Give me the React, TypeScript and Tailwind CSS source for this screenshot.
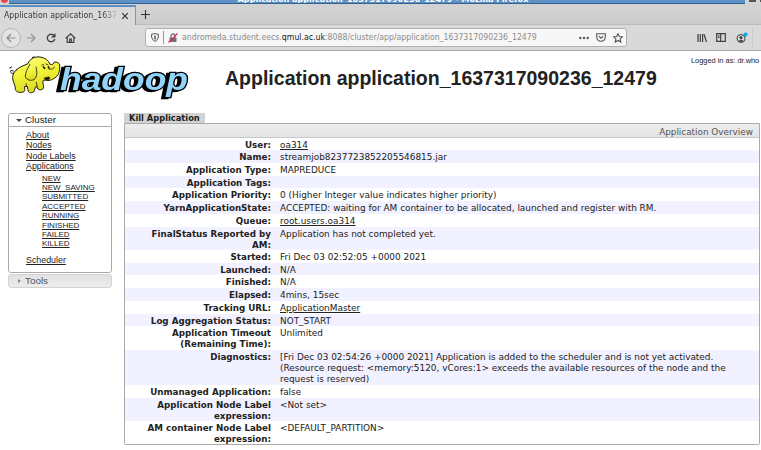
import React from "react";

type Row = { label: string[]; value: string[]; link?: boolean; h: string };

const H1 = "h-[12px]";
const H2 = "h-[13px]";
const ROWS: Row[] = [
  { label: ["User:"], value: ["oa314"], link: true, h: H1 },
  { label: ["Name:"], value: ["streamjob8237723852205546815.jar"], h: H2 },
  { label: ["Application Type:"], value: ["MAPREDUCE"], h: H2 },
  { label: ["Application Tags:"], value: [""], h: H1 },
  { label: ["Application Priority:"], value: ["0 (Higher Integer value indicates higher priority)"], h: H2 },
  { label: ["YarnApplicationState:"], value: ["ACCEPTED: waiting for AM container to be allocated, launched and register with RM."], h: H2 },
  { label: ["Queue:"], value: ["root.users.oa314"], link: true, h: H2 },
  { label: ["FinalStatus Reported by", "AM:"], value: ["Application has not completed yet."], h: "h-[23px]" },
  { label: ["Started:"], value: ["Fri Dec 03 02:52:05 +0000 2021"], h: H2 },
  { label: ["Launched:"], value: ["N/A"], h: H1 },
  { label: ["Finished:"], value: ["N/A"], h: H2 },
  { label: ["Elapsed:"], value: ["4mins, 15sec"], h: H2 },
  { label: ["Tracking URL:"], value: ["ApplicationMaster"], link: true, h: H2 },
  { label: ["Log Aggregation Status:"], value: ["NOT_START"], h: H1 },
  { label: ["Application Timeout", "(Remaining Time):"], value: ["Unlimited"], h: "h-[24px]" },
  {
    label: ["Diagnostics:"],
    value: [
      "[Fri Dec 03 02:54:26 +0000 2021] Application is added to the scheduler and is not yet activated.",
      "(Resource request: <memory:5120, vCores:1> exceeds the available resources of the node and the",
      "request is reserved)",
    ],
    h: "h-[35px]",
  },
  { label: ["Unmanaged Application:"], value: ["false"], h: H2 },
  { label: ["Application Node Label", "expression:"], value: ["<Not set>"], h: "h-[23px]" },
  { label: ["AM container Node Label", "expression:"], value: ["<DEFAULT_PARTITION>"], h: "h-[23px]" },
];

const STATES = ["NEW", "NEW_SAVING", "SUBMITTED", "ACCEPTED", "RUNNING", "FINISHED", "FAILED", "KILLED"];
const LINK = "underline decoration-[1px] underline-offset-[1px]";

function Logo() {
  return (
    <svg width="186" height="50" viewBox="6 52 186 50" className="block">
      <defs>
        <linearGradient id="hide" x1="0" y1="0" x2="0.3" y2="1">
          <stop offset="0" stopColor="#fbfb86" />
          <stop offset="0.5" stopColor="#f4f43c" />
          <stop offset="1" stopColor="#dcd820" />
        </linearGradient>
      </defs>
      <text
        x="60"
        y="89.500"
        textLength="128"
        lengthAdjust="spacingAndGlyphs"
        fill="#92d3fa"
        stroke="#000"
        strokeWidth="2.500"
        className="font-['Liberation_Sans',Arial,sans-serif] text-[32px] font-bold italic [paint-order:stroke] drop-shadow-[-3px_1px_0_#000]"
      >
        hadoop
      </text>
      <g transform="translate(0 45) scale(.3333)" strokeLinejoin="round" strokeLinecap="round" stroke="#1c1c08" strokeWidth="3">
        <path
          d="M50 74C60 64 72 62 84 56C88 42 104 34 120 36C136 38 146 46 150 58C158 60 162 56 163 51C170 50 178 54 179 60C180 80 176 92 164 99C156 105 146 109 138 105L130 106C127 113 130 118 131 126C132 134 120 137 114 132L108 124C104 128 105 136 101 141C92 146 84 142 84 135L82 124L73 125C74 130 76 136 72 140C62 145 48 141 46 134C48 122 38 112 38 98C38 87 42 80 50 74Z"
          fill="url(#hide)"
        />
        <path d="M90 58C82 72 76 82 76 96C82 106 92 108 102 104C112 96 112 82 108 66" fill="url(#hide)" strokeWidth="2.500" />
        <path d="M133 99C140 98 144 94 149 97C150 104 143 108 137 105Z" fill="#1c1c08" strokeWidth="2" />
        <path d="M125 60Q128 57 132 60M138 57l6 2M148 73Q160 74 164 66M112 126L109 112M80 124L78 116" fill="none" strokeWidth="2.500" />
        <path d="M130 66l4 4M145 66l2 3" fill="none" strokeWidth="5" />
        <path d="M40 85C32 86 29 80 33 76L40 78M29 69l6-3M97 38l5-3" fill="none" strokeWidth="3" />
      </g>
    </svg>
  );
}

function Chrome() {
  return (
    <header className="font-['DejaVu_Sans_Condensed','DejaVu_Sans',sans-serif] [font-stretch:condensed]">
      <div className="flex h-[4px] bg-[#d4d4d4]">
        <div className="w-[9px] overflow-hidden"><div className="-mt-[4px] ml-[1px] size-[7px] rounded-full bg-[#e8434f]" /></div>
        <div className="flex h-[4px] w-[736px] justify-center overflow-hidden border-b border-[#35618f] bg-[#5b91c6] pl-[12px] text-[9px] font-bold leading-[10px] text-white">
          <span className="-mt-[6px] whitespace-nowrap">Application application_1637317090236_12479 - Mozilla Firefox</span>
        </div>
        <div className="ml-[4px] h-[2px] w-[7px] bg-[#555]" />
        <div className="ml-[4px] h-[2px] w-px bg-[#555]" />
      </div>
      <div className="flex h-[21px] border-b border-[#bdbdbd] bg-linear-to-b from-[#d3d3d3] to-[#cccccc]">
        <div className="mt-[1px] flex h-[20px] w-[136px] items-center border-t-2 border-r border-t-[#5b91c6] border-r-[#929292] bg-[#d9d9d9] pl-[4px]">
          <span className="w-[115px] overflow-hidden whitespace-nowrap bg-linear-to-r from-[#333] from-85% to-transparent bg-clip-text text-[8.7px] text-transparent">Application application_1637</span>
          <svg width="8" height="8" viewBox="0 0 8 8" className="ml-[2px]"><path d="M1.200 1.200l5.600 5.600M6.800 1.200l-5.600 5.600" stroke="#333" strokeWidth="1.200" /></svg>
        </div>
        <svg width="9" height="9" viewBox="0 0 9 9" className="ml-[5px] mt-[6px]"><path d="M0 4.500h9M4.500 0v9" stroke="#333" strokeWidth="1.100" /></svg>
      </div>
      <div className="flex h-[26px] items-center border-b border-[#a3a3a3] bg-[#d9d9d9]">
        <div className="ml-[1px] flex size-[20px] items-center justify-center rounded-full border border-[#b5b5b5] bg-[#e3e3e3]">
          <svg width="10" height="10" viewBox="0 0 10 10" fill="none" stroke="#8c8c8c" strokeWidth="1.200"><path d="M9.500 5H1M5 1L1 5l4 4" /></svg>
        </div>
        <svg width="10" height="10" viewBox="0 0 10 10" fill="none" stroke="#929292" strokeWidth="1.200" className="ml-[5px]"><path d="M.5 5H9M5 1l4 4-4 4" /></svg>
        <svg width="10" height="10" viewBox="0 0 10 10" fill="none" stroke="#404040" strokeWidth="1.400" className="ml-[10px]"><path d="M8 2.500A3.800 3.800 0 1 0 8.800 6" /><path d="M9.500 0v4.500H5z" fill="#404040" stroke="none" /></svg>
        <svg width="11" height="10" viewBox="0 0 11 10" fill="none" stroke="#404040" strokeWidth="1.200" className="ml-[9px]"><path d="M.7 5.200L5.500.8l4.800 4.400M2.200 4.500v4.900h6.600V4.500M4.700 9V6h1.600v3" /></svg>
        <div className="ml-[69px] flex h-[19px] w-[482px] items-center rounded-[3px] border border-[#b0b0b0] bg-[#f7f7f7] pl-[5px]">
          <svg width="8" height="9" viewBox="0 0 8 9" fill="none" stroke="#555" strokeWidth="1"><path d="M.6 1.200Q2.500 1.200 4 .5 5.500 1.200 7.400 1.200V4Q7 7 4 8.500 1 7 .6 4z" /><path d="M4 2.500v4" strokeWidth="1.500" /></svg>
          <div className="ml-[4px] h-[13px] w-px bg-[#999]" />
          <svg width="10" height="10" viewBox="0 0 10 10" className="ml-[4px]"><path d="M1.500 4.500h7V9h-7z" fill="#707070" /><path d="M3 4.500V3a2 2 0 0 1 4 0v1.500" fill="none" stroke="#707070" strokeWidth="1.300" /><path d="M.5 9.500l9-9" stroke="#e22850" strokeWidth="1.300" /></svg>
          <span className="ml-[4px] w-[397px] whitespace-nowrap text-[8.690px] text-[#8c8c8c]">andromeda.student.eecs.<span className="text-[#222]">qmul.ac.uk</span>:8088/cluster/app/application_1637317090236_12479</span>
          <svg width="10" height="4" viewBox="0 0 10 4" fill="#555"><circle cx="1.300" cy="2" r="1.200" /><circle cx="5" cy="2" r="1.200" /><circle cx="8.700" cy="2" r="1.200" /></svg>
          <svg width="10" height="9" viewBox="0 0 10 9" fill="none" stroke="#555" strokeWidth="1.100" className="ml-[7px]"><path d="M.7.700h8.600V4a4.300 4.300 0 0 1-8.600 0zM2.800 3.200L5 5.200l2.200-2" /></svg>
          <svg width="10" height="10" viewBox="0 0 10 10" fill="none" stroke="#555" strokeWidth="1.100" className="ml-[7px]"><path d="M5 .6l1.300 2.900 3.100.3-2.300 2.100.7 3.200L5 7.500 2.200 9.100l.7-3.200L.6 3.800l3.100-.3z" /></svg>
        </div>
        <svg width="10" height="10" viewBox="0 0 10 10" stroke="#404040" strokeWidth="1.200" className="ml-[70px]"><path d="M1 1v8M3.300 1v8M5.600 1v8M7 1.200L9.500 9" /></svg>
        <svg width="10" height="9" viewBox="0 0 10 9" fill="none" stroke="#404040" strokeWidth="1.200" className="ml-[9px]"><path d="M.7.700h8.600v7.600H.7zM4.700.700v7.600M2 2.800h1.500M2 4.500h1.500" /></svg>
        <svg width="12" height="12" viewBox="0 0 12 12" className="ml-[10px]"><circle cx="5" cy="6.500" r="4" fill="none" stroke="#404040" strokeWidth="1" /><circle cx="5" cy="5.500" r="1.500" fill="#404040" /><path d="M2.500 9q2.500-3 5 0L5 10z" fill="#404040" /><circle cx="9.600" cy="2.400" r="2" fill="#00adf0" /></svg>
        <div className="ml-[4px] h-[20px] w-px bg-[#cbcbcb]" />
      </div>
    </header>
  );
}

function Sidebar() {
  return (
    <nav className="ml-[8px] w-[104px] text-[#222]">
      <div className="h-[160px] rounded-[3px] border border-[#aaa]">
        <div className="flex h-[13px] items-center border-b border-[#aaa] pl-[7px] text-[9.800px]">
          <div className="mr-[3px] border-x-[3px] border-t-[3px] border-x-transparent border-t-[#444]" />Cluster
        </div>
        <ul className="ml-[17px] mt-[3px] text-[8.850px] leading-[10.400px]">
          {["About", "Nodes", "Node Labels", "Applications"].map((t) => <li key={t}><a className={LINK}>{t}</a></li>)}
        </ul>
        <ul className="ml-[33px] mt-[2px] text-[8px] leading-[9.400px]">
          {STATES.map((t) => <li key={t}><a className={LINK}>{t}</a></li>)}
        </ul>
        <div className="ml-[17px] mt-[6px] text-[8.850px] leading-[11px]"><a className={LINK}>Scheduler</a></div>
      </div>
      <div className="mt-[1px] flex h-[14px] items-center rounded-[3px] border border-[#d3d3d3] bg-linear-to-b from-[#e2e2e2] to-[#ececec] pl-[9px] text-[9.900px] text-[#555]">
        <div className="mr-[4px] border-y-[2.500px] border-l-[3px] border-y-transparent border-l-[#888]" />Tools
      </div>
    </nav>
  );
}

export default function App() {
  return (
    <div className="h-[450px] w-[761px] overflow-hidden bg-white font-['Liberation_Sans',Arial,sans-serif]">
      <Chrome />
      <div className="flex h-[62px]">
        <div className="ml-[6px] w-[219px] pt-[1px]"><Logo /></div>
        <h1 className="mt-[15px] w-[465px] whitespace-nowrap text-[19.530px] font-bold leading-[24px] text-[#222]">Application application_1637317090236_12479</h1>
        <div className="mt-[5px] whitespace-nowrap pl-[1px] text-[7.400px] leading-[10px] text-[#222]">Logged in as: dr.who</div>
      </div>
      <div className="flex">
        <Sidebar />
        <main className="ml-[12px] w-[636px] font-['DejaVu_Sans',sans-serif] text-[#222]">
          <div className="flex h-[10px] w-[81px] items-center bg-[#d3d3d3] pl-[5px] text-[8.300px] font-bold whitespace-nowrap">Kill Application</div>
          <section className="rounded-b-[2px] border border-[#aaa]">
            <div className="flex h-[14px] items-center justify-end border-b border-[#c8c8c8] bg-linear-to-b from-[#ededed] to-[#e4e4e4] pr-[6px] pt-[4px] text-[8.850px] text-[#555]">Application Overview</div>
            {ROWS.map((r, i) => (
              <div key={i} className={`flex pt-[2px] leading-[11px] whitespace-nowrap ${r.h} ${i % 2 ? "bg-[#f1f1ff]" : "bg-white"}`}>
                <div className="w-[146px] text-right text-[8.720px] font-bold">{r.label.map((l) => <div key={l}>{l}</div>)}</div>
                <div className="ml-[9px] text-[8.920px]">{r.value.map((v) => <div key={v} className={r.link ? LINK : ""}>{v}</div>)}</div>
              </div>
            ))}
          </section>
        </main>
      </div>
    </div>
  );
}
